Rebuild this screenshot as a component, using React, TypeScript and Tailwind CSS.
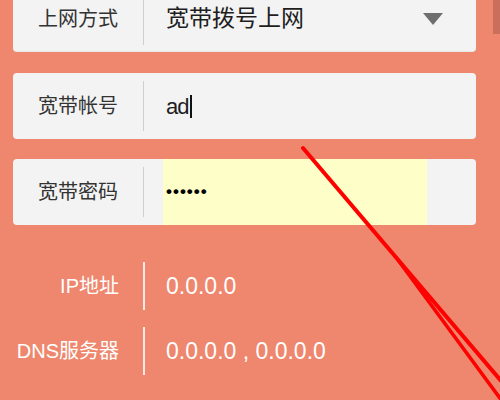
export default function App() {
  return (
    <div
      className="relative h-[400px] w-[500px] overflow-hidden bg-[#ee876d]"
      style={{ fontFamily: '"Liberation Sans", "Noto Sans CJK SC", sans-serif' }}
    >
      {/* Form cards */}
      <div className="ml-[13px] -mt-[14px] flex w-[463px] flex-col">
        <div className="flex h-[66px] items-center rounded-[4px] border-b border-[#e6e6e6] bg-[#f3f3f3]">
          <div className="w-[130px] text-center text-[20px] text-[#333]">上网方式</div>
          <div className="mb-[6px] h-[46px] w-px self-end bg-[#cfcfcf]" />
          <div className="flex flex-1 items-center pl-[22px] pr-[33px]">
            <span className="flex-1 text-[23px] text-[#1e1e1e]">宽带拨号上网</span>
            <svg width="20" height="12" viewBox="0 0 20 12">
              <polygon points="0,0 20,0 10,12" fill="#6f6f6f" />
            </svg>
          </div>
        </div>

        <div className="mt-[21px] flex h-[66px] items-center rounded-[4px] bg-[#f3f3f3]">
          <div className="w-[130px] text-center text-[20px] text-[#333]">宽带帐号</div>
          <div className="h-[50px] w-px bg-[#cfcfcf]" />
          <div className="flex items-center pl-[22px]">
            <span className="text-[22px] tracking-[-1px] text-[#1e1e1e]">ad</span>
            <span className="ml-[2px] h-[23px] w-[1.5px] bg-[#111]" />
          </div>
        </div>

        <div className="mt-[20px] flex h-[66px] items-center overflow-hidden rounded-[4px] bg-[#f3f3f3]">
          <div className="w-[130px] text-center text-[20px] text-[#333]">宽带密码</div>
          <div className="h-[50px] w-px bg-[#cfcfcf]" />
          <div className="ml-[19px] flex h-full w-[264px] items-center bg-[#fefec8] pl-[3px]">
            <span className="text-[17px] font-bold tracking-[1px] text-black">••••••</span>
          </div>
        </div>
      </div>

      {/* Status rows */}
      <div className="mt-[37px] flex flex-col gap-[17px] text-white">
        <div className="flex h-[48px] items-center">
          <div className="w-[119px] text-right text-[20px]">IP地址</div>
          <div className="ml-[24px] h-full w-[2px] bg-[#fde9e2]" />
          <div className="pl-[21px] text-[23px]">0.0.0.0</div>
        </div>
        <div className="flex h-[48px] items-center">
          <div className="w-[119px] text-right text-[20px]">DNS服务器</div>
          <div className="ml-[24px] h-full w-[2px] bg-[#fde9e2]" />
          <div className="pl-[21px] text-[23px]">0.0.0.0 , 0.0.0.0</div>
        </div>
      </div>

      {/* scrollbar thumb */}
      <div className="absolute right-0 top-0 h-[34px] w-[7px] bg-[#c96f5c]" />

      {/* hand-drawn red marks */}
      <svg className="pointer-events-none absolute left-0 top-0" width="500" height="400">
        <path d="M303,148 L502,382" stroke="#ff0000" strokeWidth="4" fill="none" strokeLinecap="round" />
        <path d="M398,260 L502,401" stroke="#ff0000" strokeWidth="3.5" fill="none" strokeLinecap="round" />
      </svg>
    </div>
  )
}
